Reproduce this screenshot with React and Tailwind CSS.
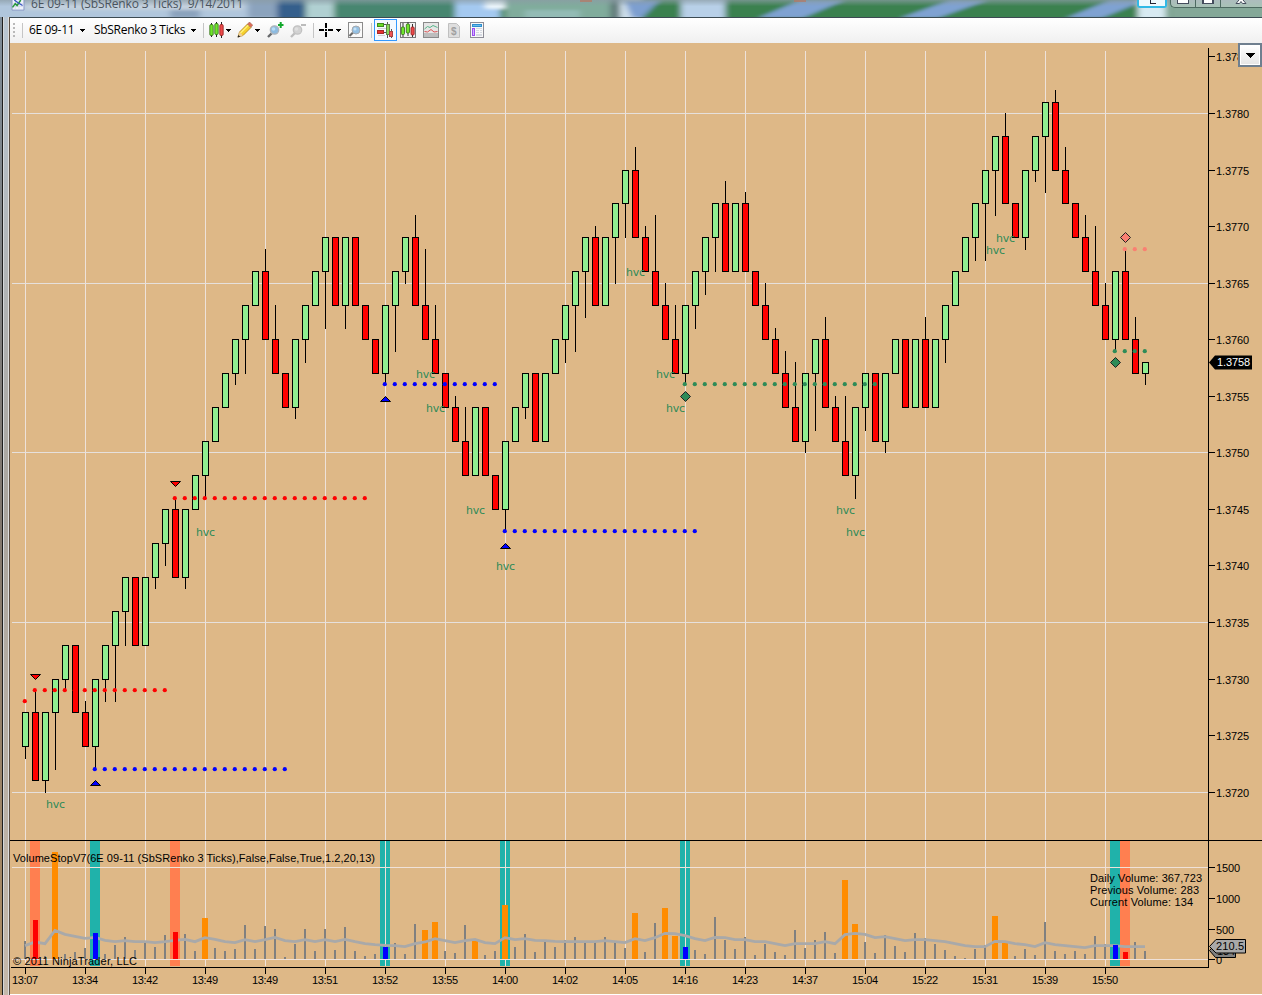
// [open, close, wick] in ticks above 1.3700, the wick end is optional
const bars = [
  [24, 27, 23], [27, 21, 29], [21, 27, 20], [27, 30, 22], [30, 33, 29], [33, 27], [27, 24, 28], [24, 30, 22],
  [30, 33, 28], [33, 36, 28], [36, 39, 33], [39, 33], [33, 39], [39, 42, 38], [42, 45, 40], [45, 39, 46],
  [39, 45, 38], [45, 48], [48, 51, 46], [51, 54], [54, 57], [57, 60, 56], [60, 63, 57], [63, 66],
  [66, 60, 68], [60, 57, 63], [57, 54], [54, 60, 53], [60, 63, 58], [63, 66], [66, 69, 61], [69, 63],
  [63, 69, 61], [69, 63], [63, 60], [60, 57], [57, 63, 56], [63, 66, 59], [66, 69, 65], [69, 63, 71],
  [63, 60, 68], [60, 57, 63], [57, 54], [54, 51, 55], [51, 48, 54], [48, 54], [54, 48], [48, 45],
  [45, 51, 43], [51, 54], [54, 57, 53], [57, 51], [51, 57], [57, 60], [60, 63, 58], [63, 66, 59],
  [66, 69, 62], [69, 63, 70], [63, 69], [69, 72, 65], [72, 75, 69], [75, 69, 77], [69, 66, 70], [66, 63, 71],
  [63, 60, 65], [60, 57, 63], [57, 63, 56], [63, 66, 61], [66, 69, 64], [69, 72, 66], [72, 66, 74], [66, 72],
  [72, 66, 73], [66, 63], [63, 60, 65], [60, 57, 61], [57, 54, 59], [54, 51, 58], [51, 57, 50], [57, 60, 52],
  [60, 54, 62], [54, 51, 55], [51, 48, 55], [48, 54, 46], [54, 57, 52], [57, 51], [51, 57, 50], [57, 60],
  [60, 54], [54, 60], [60, 54, 62], [54, 60], [60, 63, 58], [63, 66], [66, 69], [69, 72, 67],
  [72, 75, 67], [75, 78, 71], [78, 72, 80], [72, 69], [69, 75, 68], [75, 78, 74], [78, 81, 73], [81, 75, 82],
  [75, 72, 77], [72, 69], [69, 66, 71], [66, 63, 70], [63, 60, 65], [60, 66, 59], [66, 60, 68], [60, 57, 62],
  [57, 58, 56],
];

// volume bar heights
const volume = [
  18, 39, 3, 107, 5, 7, 11, 26, 5, 14, 22, 9, 18, 12, 24, 27, 25, 8, 41, 11, 8, 10, 34, 10, 33, 30, 2, 15, 30, 8,
  30, 9, 32, 8, 3, 5, 12, 16, 5, 35, 29, 37, 8, 6, 34, 18, 4, 8, 54, 12, 25, 7, 17, 12, 19, 22, 16, 18, 22, 17,
  11, 46, 7, 36, 51, 23, 12, 9, 5, 42, 19, 10, 22, 4, 15, 7, 4, 29, 11, 19, 27, 6, 79, 35, 17, 6, 24, 13, 7, 26,
  21, 15, 9, 3, 1, 10, 14, 43, 16, 3, 10, 4, 37, 8, 5, 8, 5, 23, 15, 14, 7, 17, 8,
];

// volume average, in thirds of a pixel below the panel origin
const average = [
  347, 336, 341, 301, 313, 319, 325, 322, 331, 335, 332, 335, 335, 338, 335, 331, 328, 335, 323, 328, 335, 338,
  329, 335, 329, 322, 332, 335, 329, 335, 329, 335, 328, 335, 341, 344, 346, 347, 350, 341, 336, 326, 332, 338,
  332, 328, 338, 341, 323, 329, 326, 331, 332, 334, 335, 335, 335, 335, 332, 335, 338, 326, 332, 323, 310, 311,
  317, 326, 332, 322, 323, 329, 329, 335, 335, 341, 347, 341, 341, 341, 335, 341, 314, 310, 313, 323, 320, 326,
  332, 329, 329, 332, 335, 341, 347, 350, 350, 334, 335, 341, 344, 350, 338, 344, 347, 350, 353, 347, 347, 347,
  350, 350, 350,
];

const orangeBars = [3, 18, 40, 41, 45, 48, 61, 64, 65, 82, 83, 97, 98];
const sellBars = [1, 15, 110];
const buyBars = [7, 36, 48, 66, 109];

const times = [
  "13:07", "13:34", "13:42", "13:49", "13:49", "13:51", "13:52", "13:55", "14:00", "14:02",
  "14:05", "14:16", "14:23", "14:37", "15:04", "15:22", "15:31", "15:39", "15:50",
];

// dotted stop levels: first bar, last bar, price, color
const stops = [
  [0, 0, 28, "#ff0000"],
  [1, 14, 29, "#ff0000"],
  [15, 34, 46, "#ff0000"],
  [7, 26, 22, "#0000ff"],
  [36, 47, 56, "#0000ff"],
  [48, 67, 43, "#0000ff"],
  [66, 85, 56, "#2e8b57"],
  [109, 112, 59, "#2e8b57"],
  [110, 112, 68, "#fa8072"],
];

const hvc = [
  [46, 808], [196, 536], [416, 378], [426, 412], [466, 514], [496, 570], [626, 276],
  [656, 378], [666, 412], [836, 514], [846, 536], [996, 242], [986, 254],
];

const barX = (i) => 25 + i * 10;
const priceY = (p) => Math.floor(113.5 + (80 - p) * 11.31);

function Candle({ i, bar }) {
  const [open, close, wick] = bar;
  const x = barX(i);
  const top = priceY(Math.max(open, close));
  const bottom = priceY(Math.min(open, close));
  const end = wick === undefined ? top : priceY(wick);
  const y0 = Math.min(top, end);
  const y1 = Math.max(bottom, end);
  return (
    <g>
      <rect x={x} y={y0} width="1" height={y1 - y0 + 1} fill="#000" />
      <rect x={x - 3} y={top} width="7" height={bottom - top + 1} fill="#000" />
      <rect x={x - 2} y={top + 1} width="5" height={bottom - top - 1} fill={close > open ? "#90ee90" : "#ff0000"} />
    </g>
  );
}

function VolumeBar({ i, h }) {
  const x = barX(i);
  if (orangeBars.includes(i)) return <rect x={x - 3} y={959 - h} width="6" height={h} fill="#ff8c00" />;
  if (sellBars.includes(i) || buyBars.includes(i)) return null;
  return <rect x={x - 1} y={959 - h} width="2" height={h} fill="#808080" />;
}

function SignalBar({ i, color }) {
  if (orangeBars.includes(i)) return null;
  return <rect x={barX(i) - 2} y={959 - volume[i]} width="5" height={volume[i]} fill={color} shapeRendering="crispEdges" />;
}

function Chart() {
  return (
    <svg
      viewBox="10 43 1252 951"
      className="block h-[951px] w-[1252px] bg-[#deb887] font-['Liberation_Sans'] text-[11px]"
    >
      <g shapeRendering="crispEdges">
        {/* signal bands */}
        {sellBars.map((i) => (
          <rect key={i} x={barX(i) - 5} y="841" width="10" height="125" fill="#ff7f50" />
        ))}
        {buyBars.map((i) => (
          <rect key={i} x={barX(i) - 5} y="841" width="10" height="125" fill="#20b2aa" />
        ))}

        {/* grid */}
        {times.map((t, i) => (
          <rect key={i} x={25 + i * 60} y="51" width="1" height="915" fill="#eee2da" />
        ))}
        {[80, 65, 50, 35, 20].map((p) => (
          <rect key={p} x="12" y={priceY(p)} width="1196" height="1" fill="#e6e0dc" />
        ))}
        <rect x="12" y="867" width="1196" height="1" fill="#efe1d8" />
        <rect x="12" y="959" width="1196" height="1" fill="#efe1d8" />

        {volume.map((h, i) => (
          <VolumeBar key={i} i={i} h={h} />
        ))}
        {bars.map((b, i) => (
          <Candle key={i} i={i} bar={b} />
        ))}

        {/* axes */}
        <rect x="10" y="840" width="1252" height="1" />
        <rect x="11" y="967" width="1198" height="1" />
        <rect x="1208" y="48" width="1" height="920" />
        {times.map((t, i) => (
          <rect key={i} x={25 + i * 60} y="968" width="1" height="6" />
        ))}
        {Array.from({ length: 14 }, (_, i) => (
          <rect key={i} x="1209" y={priceY(85 - i * 5)} width="6" height="1" />
        ))}
        {[867, 898, 929, 959].map((y) => (
          <rect key={y} x="1209" y={y} width="6" height="1" />
        ))}
      </g>

      <polyline
        points={average.map((v, i) => `${barX(i)},${830 + v / 3}`).join(" ")}
        fill="none"
        stroke="#a9a9a9"
        strokeWidth="2.8"
      />
      {sellBars.map((i) => (
        <SignalBar key={i} i={i} color="#ff0000" />
      ))}
      {buyBars.map((i) => (
        <SignalBar key={i} i={i} color="#0000ff" />
      ))}

      {stops.map(([from, to, p, color], n) =>
        Array.from({ length: to - from + 1 }, (_, k) => (
          <circle key={`${n}-${k}`} cx={barX(from + k) - 0.2} cy={priceY(p) + 0.2} r="2.1" fill={color} />
        ))
      )}

      {/* entry markers */}
      {[[35, 674], [175, 481]].map(([x, y]) => (
        <path key={x} d={`M${x - 4.5} ${y + 0.5}h10l-5 5z`} fill="#ff0000" stroke="#000" />
      ))}
      {[[95, 785], [385, 401], [505, 548]].map(([x, y]) => (
        <path key={x} d={`M${x - 4.5} ${y + 0.5}h10l-5 -5z`} fill="#0000ff" stroke="#000" />
      ))}
      {[[685, 396, "#2e8b57"], [1115, 362, "#2e8b57"], [1125, 237, "#fa8072"]].map(([x, y, c]) => (
        <path key={x} d={`M${x + 0.5} ${y - 4.5}l5 5l-5 5l-5 -5z`} fill={c} stroke="#222" />
      ))}

      <g fill="#2e8b57" className="font-['DejaVu_Sans'] text-[11px]">
        {hvc.map(([x, y]) => (
          <text key={x} x={x} y={y} textLength="19">hvc</text>
        ))}
      </g>

      {Array.from({ length: 14 }, (_, i) => (
        <text key={i} x="1216" y={priceY(85 - i * 5) + 5} textLength="33">{`1.37${85 - i * 5}`}</text>
      ))}
      {times.map((t, i) => (
        <text key={i} x={12 + i * 60} y="984" textLength="26">{t}</text>
      ))}
      <text x="1216" y="872" textLength="24">1500</text>
      <text x="1216" y="903" textLength="24">1000</text>
      <text x="1216" y="934" textLength="18">500</text>
      <text x="1216" y="964">0</text>

      <text x="13" y="862" textLength="362">VolumeStopV7(6E 09-11 (SbSRenko 3 Ticks),False,False,True,1.2,20,13)</text>
      <text x="13" y="965" textLength="124">© 2011 NinjaTrader, LLC</text>
      <text x="1090" y="882" textLength="112">Daily Volume: 367,723</text>
      <text x="1090" y="894" textLength="109">Previous Volume: 283</text>
      <text x="1090" y="906" textLength="103">Current Volume: 134</text>

      {/* axis flags */}
      <path d="M1209 362.5l6 -7h37v14h-37z" />
      <text x="1217" y="366" textLength="33" fill="#fff">1.3758</text>
      <path d="M1209.5 950.5l6 -6.5h20v13.5h-20z" fill="#808080" stroke="#000" />
      <text x="1217" y="955" textLength="18">134</text>
      <path d="M1209.5 946.5l6.500 -7h29.500v13.500h-29.500z" fill="#a9a9a9" stroke="#000" />
      <text x="1216" y="950" textLength="28">210.5</text>
    </svg>
  );
}

function Caret({ className }) {
  return (
    <svg viewBox="0 0 5 3" className={`h-[3px] w-[5px] shrink-0 ${className}`} shapeRendering="crispEdges">
      <path d="M0 0h5v1h-5zM1 1h3v1h-3zM2 2h1v1h-1z" />
    </svg>
  );
}

const Sep = ({ className }) => <div className={`h-[15px] w-px shrink-0 bg-[#c5c5c5] ${className}`} />;

function CandlesIcon() {
  return (
    <svg viewBox="0 0 15 16" className="ml-[5px] h-4 w-[15px] shrink-0">
      <path d="M2.500 1v14M7.500 0v15M12.500 0v16" stroke="#222" />
      <rect x=".8" y="2.500" width="3.400" height="11" rx="1.200" fill="#6fe62b" stroke="#2f6a14" strokeWidth=".8" />
      <rect x="5.800" y="1.500" width="3.400" height="11" rx="1.200" fill="#6fe62b" stroke="#2f6a14" strokeWidth=".8" />
      <rect x="10.800" y="2.500" width="3.400" height="11" rx="1.200" fill="#ec4a4a" stroke="#8f2020" strokeWidth=".8" />
    </svg>
  );
}

function PencilIcon() {
  return (
    <svg viewBox="0 0 16 16" className="ml-[6px] h-4 w-4 shrink-0">
      <path d="M1 15l1.500 -5l8 -8l3.500 3.500l-8 8z" fill="#f5cf2c" stroke="#ae7b10" strokeWidth=".8" />
      <path d="M3.500 11l8 -8" stroke="#fff27c" strokeWidth="1.500" />
      <path d="M10.500 2l2 -2l3.300 3.300l-2 2z" fill="#de6b58" stroke="#9a6654" strokeWidth=".6" />
      <path d="M1 15l1.500 -5l3.500 3.500z" fill="#efcf99" />
      <path d="M0.500 15.500l.8 -2.600l2 1.800z" fill="#222" />
    </svg>
  );
}

function ZoomIcon({ disabled, className }) {
  return (
    <svg viewBox="0 0 17 16" className={`h-4 w-[17px] shrink-0 ${className}`}>
      <path d="M1 15l4.500 -4.500" stroke={disabled ? "#bdbdbd" : "#66686b"} strokeWidth="2.400" />
      <circle cx="7.500" cy="8" r="4.200" fill={disabled ? "#d2d2d2" : "#8dbbe0"} stroke={disabled ? "#c2c2c2" : "#aeb4ba"} strokeWidth="1.300" />
      <circle cx="6.500" cy="7" r="1.800" fill={disabled ? "#e0e0e0" : "#b7dbf4"} />
      {disabled ? (
        <path d="M11 3h5" stroke="#bcbcbc" strokeWidth="2" />
      ) : (
        <path d="M11 3h5.500M13.700 0v6" stroke="#12a82c" strokeWidth="2" />
      )}
    </svg>
  );
}

function CrosshairIcon() {
  return (
    <svg viewBox="0 0 15 14" className="ml-[5px] h-[14px] w-[15px] shrink-0" shapeRendering="crispEdges">
      <path d="M0 6h5v2h-5zM9 6h5v2h-5zM6 0h2v5h-2zM6 9h2v5h-2zM6 6h2v2h-2z" />
    </svg>
  );
}

function PageZoomIcon() {
  return (
    <svg viewBox="0 0 15 16" className="ml-[7px] h-4 w-[15px] shrink-0">
      <rect x=".5" y=".5" width="14" height="15" fill="#fafafa" stroke="#8b8b8b" />
      <path d="M1.500 14l4 -4" stroke="#696969" strokeWidth="2.200" />
      <circle cx="8" cy="8" r="4" fill="#94c0e3" stroke="#a4a9ae" />
      <circle cx="7" cy="7" r="1.500" fill="#c5e2f7" />
    </svg>
  );
}

function TraderIcon() {
  return (
    <svg viewBox="0 0 17 16" className="h-4 w-[17px]" shapeRendering="crispEdges">
      <path d="M7 2h3v1h-3zM7 10h3v1h-3zM10 0h1v16h-1zM14 7h1v9h-1z" fill="#555" />
      <path d="M0 1h7v4h-7z" fill="#3f8a1e" />
      <path d="M1 2h5v2h-5z" fill="#69dc26" />
      <path d="M0 8h7v4h-7z" fill="#a52a2a" />
      <path d="M1 9h5v2h-5z" fill="#e83131" />
      <path d="M9 2h4v11h-4z" fill="#5d8547" />
      <path d="M10 3h2v9h-2z" fill="#8ad65c" />
      <path d="M12 9h4v6h-4z" fill="#a84242" />
      <path d="M13 10h2v4h-2z" fill="#ef5252" />
      <path d="M1 6h8v1h-8zM1 13h7v1h-7z" fill="#d2d2d2" />
    </svg>
  );
}

function DataBoxIcon() {
  return (
    <svg viewBox="0 0 16 16" className="ml-[3px] h-4 w-4 shrink-0">
      <rect x=".5" y=".5" width="15" height="15" fill="#f2f2f2" stroke="#777" />
      <path d="M3 1v14M8 0v14M12.500 2v13" stroke="#333" />
      <rect x="1.300" y="5" width="3.200" height="7.500" rx="1" fill="#6fe62b" stroke="#2f6a14" strokeWidth=".8" />
      <rect x="6.300" y="2" width="3.200" height="9" rx="1" fill="#6fe62b" stroke="#2f6a14" strokeWidth=".8" />
      <rect x="11" y="5" width="3.200" height="8" rx="1" fill="#ec4a4a" stroke="#8f2020" strokeWidth=".8" />
    </svg>
  );
}

function IndicatorIcon() {
  return (
    <svg viewBox="0 0 16 16" className="ml-[7px] h-4 w-4 shrink-0">
      <rect x=".5" y=".5" width="15" height="15" fill="#e5e5e5" stroke="#8a8a8a" />
      <rect x="1" y="11" width="14" height="4" fill="#bdbdbd" />
      <path d="M1.500 7l3 -2.500l2.500 1l3 -2l4.500 2" fill="none" stroke="#57b58a" />
      <path d="M1.500 9.500l3 .5l3.500 -2.500l3 2.500l3.500 -.5" fill="none" stroke="#de5353" />
    </svg>
  );
}

function DollarIcon() {
  return (
    <svg viewBox="0 0 12 15" className="ml-[9px] h-[15px] w-3 shrink-0">
      <path d="M.5 .5h8l3 3v11h-11z" fill="#dedede" stroke="#c0c0c0" />
      <text x="3" y="11.500" className="font-['Liberation_Sans'] text-[10px] font-bold" fill="#a0a0a0">$</text>
    </svg>
  );
}

function PropertiesIcon() {
  return (
    <svg viewBox="0 0 14 16" className="ml-[10px] h-4 w-[14px] shrink-0" shapeRendering="crispEdges">
      <rect x="0" y="0" width="14" height="16" fill="#8c8c96" />
      <rect x="1" y="1" width="12" height="14" fill="#f8f8f8" />
      <path d="M2 2h10v3h-10z" fill="#2d8fd0" />
      <path d="M3 3h8v1h-8z" fill="#6bbcec" />
      <path d="M2 6h3v8h-3z" fill="#9a4df0" />
      <path d="M3 7h1v6h-1z" fill="#d3b0fb" />
      <path d="M6 6h6v1h-6zM6 8h3v1h-3zM10 8h2v1h-2zM6 10h3v1h-3zM10 10h2v1h-2zM6 12h6v2h-6z" fill="#d5d9e2" />
    </svg>
  );
}

function Toolbar() {
  return (
    <div className="flex h-[25px] w-full items-center rounded-t-[3px] bg-linear-to-b from-white to-[#f0f0f0] pb-px font-['Open_Sans'] text-[12px] leading-none text-black">
      <div className="ml-[3px] flex w-[2px] shrink-0 flex-col gap-[2px]">
        {[0, 1, 2, 3].map((n) => (
          <span key={n} className="size-[2px] bg-[#b9b9b9]" />
        ))}
      </div>
      <Sep className="ml-[7px]" />
      <span className="ml-[6px] w-[46px] tracking-[-0.35px] whitespace-nowrap">6E 09-11</span>
      <Caret className="ml-[5px]" />
      <span className="ml-[9px] w-[93px] tracking-[-0.3px] whitespace-nowrap">SbSRenko 3 Ticks</span>
      <Caret className="ml-[4px]" />
      <Sep className="ml-[7px]" />
      <CandlesIcon />
      <Caret className="ml-[2px]" />
      <PencilIcon />
      <Caret className="ml-[2px]" />
      <ZoomIcon className="ml-[7px]" />
      <ZoomIcon disabled className="ml-[6px]" />
      <Sep className="ml-[6px]" />
      <CrosshairIcon />
      <Caret className="ml-[2px]" />
      <PageZoomIcon />
      <Sep className="ml-[8px]" />
      <div className="ml-[2px] flex h-[22px] w-[23px] shrink-0 items-center justify-center border border-[#3399ff] bg-[#f4f9ff]">
        <TraderIcon />
      </div>
      <DataBoxIcon />
      <IndicatorIcon />
      <DollarIcon />
      <PropertiesIcon />
    </div>
  );
}

// desktop showing through the glass title bar
function GlassBackdrop() {
  return (
    <svg viewBox="0 0 1262 18" className="absolute inset-0 h-[18px] w-[1262px]">
      <defs>
        <filter id="glass" x="0" y="0" width="1" height="1">
          <feGaussianBlur stdDeviation="3 1.500" />
        </filter>
        <linearGradient id="sheen" x1="0" y1="0" x2="0" y2="1">
          <stop offset="0" stopColor="#8b9ca5" stopOpacity=".7" />
          <stop offset=".35" stopColor="#8b9ca5" stopOpacity="0" />
        </linearGradient>
      </defs>
      <g filter="url(#glass)">
        <path d="M-20 -10h1302v48h-1302z" fill="#3b8150" />
        <path d="M-10 -10h290v38h-290z" fill="#b0c6dc" />
        <path d="M25 -3h218v13h-218z" fill="#c3d0dd" />
        <path d="M170 10h30v8h-30zM248 -4h30v22h-30z" fill="#8ba3bd" />
        <path d="M277 -10h28v38h-28z" fill="#365f8c" />
        <path d="M306 -10h28v38h-28z" fill="#b0d0d2" />
        <path d="M335 -10h118v38h-118z" fill="#468670" />
        <path d="M455 -10h45v38h-45z" fill="#a4c9f0" />
        <path d="M485 -4h26v13h-26z" fill="#eaf4fa" />
        <path d="M505 -10h105v38h-105z" fill="#80ac9c" />
        <path d="M525 10h55v10h-55z" fill="#93bbb5" />
        <path d="M610 -10h10v38h-10z" fill="#617a78" />
        <path d="M620 -10h22v38h-22z" fill="#cfe0ec" />
        <path d="M624 0h36l-18 18h-10z" fill="#7d9fd0" />
        <path d="M681 -10h44v38h-44z" fill="#b8d0e8" />
        <path d="M800 0h45l-42 18h-45zM950 0h38l-50 18h-38zM1110 0h36l-44 18h-36z" fill="#7fa2d2" />
        <path d="M1138 -10h28v38h-28z" fill="#d8eaf2" />
        <path d="M1168 -10h110v38h-110z" fill="#84a898" />
      </g>
      <path d="M0 0h1262v18h-1262z" fill="url(#sheen)" />
      <path d="M580 0h12v2h-12zM794 0h12v2h-12z" fill="#b77863" opacity=".7" />
    </svg>
  );
}

function TitleBar() {
  return (
    <div className="relative h-[17px] w-full overflow-hidden">
      <GlassBackdrop />
      <div className="relative flex items-start">
        <svg viewBox="0 0 14 12" className="ml-[11px] h-[11px] w-[14px]">
          <path d="M.5 -2h13v13h-13z" fill="#edf2fa" stroke="#8796c4" />
          <path d="M1 4h12M1 7h12M4 0v11M8 0v11" stroke="#c6cee6" strokeWidth=".6" />
          <path d="M1 8l3 -4l2 2l4 -6" fill="none" stroke="#27963a" strokeWidth="1.600" />
          <path d="M3 0l4 3l5 3" fill="none" stroke="#3552c0" strokeWidth="1.400" />
        </svg>
        <span className="-mt-[5px] ml-[6px] font-['Open_Sans'] text-[12px] leading-[18px] tracking-[-0.13px] whitespace-pre text-[#4a545e]">
          6E 09-11 (SbSRenko 3 Ticks)  9/14/2011
        </span>
      </div>
      <div className="absolute top-0 right-0 flex h-[8px]">
        <div className="mr-[3px] flex h-[8px] w-[30px] items-start justify-center rounded-b-[3px] border-x-2 border-b-2 border-[#31b9e6] bg-[#eef9fd]">
          <svg viewBox="0 0 7 4" className="h-1 w-[7px]" shapeRendering="crispEdges">
            <path d="M1 0h1v3h5v1h-6z" fill="#223" />
          </svg>
        </div>
        <div className="flex h-[8px] w-[92px] rounded-bl-[5px] border-b border-l border-[#4d6a61] bg-white/30">
          <div className="flex w-[25px] justify-center border-r border-[#4d6a61]">
            <span className="h-[4px] w-[12px] border border-t-0 border-[#444c5c] bg-white" />
          </div>
          <div className="flex w-[25px] justify-center border-r border-[#4d6a61]">
            <span className="h-[4px] w-[12px] border-x-2 border-b border-[#444c5c] bg-white" />
          </div>
          <svg viewBox="0 0 12 4" className="ml-[14px] h-1 w-3">
            <path d="M4 0l-3 3.500h3.500l1.500 -2l1.500 2h3.500l-3 -3.500" fill="#fff" stroke="#444c5c" />
          </svg>
        </div>
      </div>
    </div>
  );
}

export default function App() {
  return (
    <div className="flex h-[995px] w-[1262px] flex-col overflow-hidden bg-white">
      <TitleBar />
      <div className="flex flex-1">
        <div className="flex w-[10px] shrink-0">
          <div className="w-[2px] bg-linear-to-b from-[#7e8c98] via-[#80776e] to-[#b08e62]" />
          <div className="w-px bg-[#1e1e1e]" />
          <div className="w-px bg-[#d5d8da]" />
          <div className="w-[4px] bg-linear-to-b from-[#b9c6d2] via-[#aaa59e] to-[#c4b8aa]" />
          <div className="w-px bg-[#dcdcdc]" />
          <div className="w-px bg-[#5a4d42]" />
        </div>
        <div className="relative flex w-[1252px] flex-col border-t border-[#3c4a52]">
          <Toolbar />
          <Chart />
          <button className="absolute top-[25px] right-0 flex h-[24px] w-[24px] items-center justify-center border-2 border-[#6f7f8f] bg-white">
            <span className="flex h-[18px] w-[18px] items-center justify-center bg-linear-to-b from-white to-[#e6e6e6]">
              <svg viewBox="0 0 9 5" className="h-[5px] w-[9px]" shapeRendering="crispEdges">
                <path d="M0 0h9v1h-9zM1 1h7v1h-7zM2 2h5v1h-5zM3 3h3v1h-3zM4 4h1v1h-1z" />
              </svg>
            </span>
          </button>
        </div>
      </div>
    </div>
  );
}
